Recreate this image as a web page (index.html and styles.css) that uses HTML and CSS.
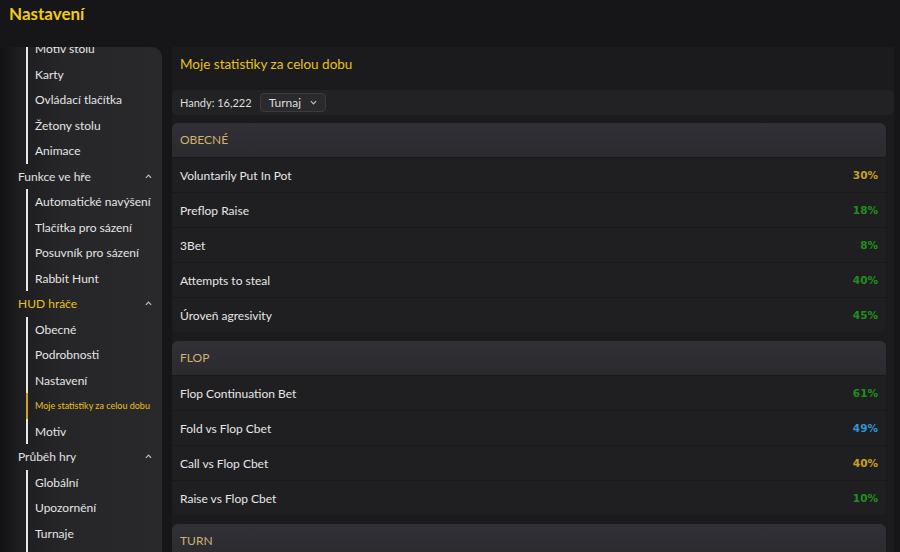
FILE: index.html
```html
<!DOCTYPE html>
<html>
<head>
	<title>Nastavení</title>
	<link rel="stylesheet" href="styles.css">
</head>
<body>
	<div class="topbar">Nastavení</div>

	<div class="layout">
		<div class="sidebar">
			<div class="menu">
				<ul class="sublist">
					<li>Motiv stolu</li>
					<li>Karty</li>
					<li>Ovládací tlačítka</li>
					<li>Žetony stolu</li>
					<li>Animace</li>
				</ul>
				<div class="group">Funkce ve hře <svg class="caret" viewBox="0 0 8 5"><polyline points="1,4 4,1 7,4"/></svg></div>
				<ul class="sublist">
					<li>Automatické navýšení</li>
					<li>Tlačítka pro sázení</li>
					<li>Posuvník pro sázení</li>
					<li>Rabbit Hunt</li>
				</ul>
				<div class="group active">HUD hráče <svg class="caret" viewBox="0 0 8 5"><polyline points="1,4 4,1 7,4"/></svg></div>
				<ul class="sublist">
					<li>Obecné</li>
					<li>Podrobnosti</li>
					<li>Nastavení</li>
					<li class="current">Moje statistiky za celou dobu</li>
					<li>Motiv</li>
				</ul>
				<div class="group">Průběh hry <svg class="caret" viewBox="0 0 8 5"><polyline points="1,4 4,1 7,4"/></svg></div>
				<ul class="sublist">
					<li>Globální</li>
					<li>Upozornění</li>
					<li>Turnaje</li>
					<li class="empty"></li>
				</ul>
			</div>
		</div>

		<div class="main">
			<div class="title">Moje statistiky za celou dobu</div>

			<div class="handsbar">
				<span>Handy: 16,222</span>
				<div class="select">Turnaj <svg class="down" viewBox="0 0 8 5"><polyline points="1,1 4,4 7,1"/></svg></div>
			</div>

			<div class="card">
				<div class="cardhead">OBECNÉ</div>
				<div class="row"><span>Voluntarily Put In Pot</span><b class="gold">30%</b></div>
				<div class="row"><span>Preflop Raise</span><b class="green">18%</b></div>
				<div class="row"><span>3Bet</span><b class="green">8%</b></div>
				<div class="row"><span>Attempts to steal</span><b class="green">40%</b></div>
				<div class="row"><span>Úroveň agresivity</span><b class="green">45%</b></div>
			</div>

			<div class="card">
				<div class="cardhead">FLOP</div>
				<div class="row"><span>Flop Continuation Bet</span><b class="green">61%</b></div>
				<div class="row"><span>Fold vs Flop Cbet</span><b class="blue">49%</b></div>
				<div class="row"><span>Call vs Flop Cbet</span><b class="gold">40%</b></div>
				<div class="row"><span>Raise vs Flop Cbet</span><b class="green">10%</b></div>
			</div>

			<div class="card">
				<div class="cardhead">TURN</div>
			</div>
		</div>
	</div>
</body>
</html>
```

FILE: styles.css
```css
*{
	box-sizing:border-box;
}

html,body{
	margin:0;
	height:100%;
	overflow:hidden;
}

body{
	background-color:#161618;
	font-family:Lato,"Noto Sans",sans-serif;
	color:#e4e4e4;
}

.topbar{
	height:47px;
	padding:3px 0 0 9px;
	font-size:17px;
	font-weight:bold;
	color:#f2cb14;
}

.layout{
	display:flex;
	height:505px;
}

.sidebar{
	width:162px;
	flex-shrink:0;
	overflow:hidden;
	border-radius:0 10px 0 0;
	background:linear-gradient(90deg,#121214 0%,#1e1e21 12%,#262629 40%,#29292c 100%);
}

.menu{
	margin-top:-11px;
}

.sublist{
	list-style:none;
	margin:0 0 0 26px;
	padding:0;
}

.sublist li{
	height:25.5px;
	line-height:25.5px;
	padding-left:7px;
	border-left:2px solid #e8e8e8;
	font-size:12px;
	white-space:nowrap;
}

.sublist li.current{
	border-left-color:#c9a227;
	color:#e8c21c;
	font-size:9px;
}

.group{
	display:flex;
	align-items:center;
	justify-content:space-between;
	height:25.5px;
	padding:0 10px 0 18px;
	font-size:12px;
	color:#e0e0e0;
}

.group.active{
	color:#e8c21c;
}

.caret{
	width:7px;
	height:5px;
	fill:none;
	stroke:#bdbdbd;
	stroke-width:1.4;
}

.main{
	flex:1;
	margin-left:10px;
	margin-right:6px;
	background-color:#1b1b1d;
}

.title{
	padding:9px 0 0 8px;
	height:43px;
	line-height:16px;
	font-size:13.5px;
	color:#e8c21c;
}

.handsbar{
	display:flex;
	align-items:center;
	gap:8px;
	height:25px;
	padding-left:8px;
	margin-bottom:8px;
	border-radius:5px;
	background-color:#222224;
	font-size:11px;
	color:#dedede;
}

.select{
	display:flex;
	align-items:center;
	gap:9px;
	height:19px;
	padding:0 8px;
	border:1px solid #3b3b3f;
	border-radius:4px;
	background-color:#2a2a2d;
	font-size:12px;
}

.down{
	width:7px;
	height:5px;
	fill:none;
	stroke:#bdbdbd;
	stroke-width:1.4;
}

.card{
	margin-right:8px;
	margin-bottom:9px;
	border-radius:6px;
	overflow:hidden;
	background-color:#1f1f21;
}

.cardhead{
	height:34px;
	line-height:34px;
	padding-left:8px;
	font-size:12px;
	color:#d0b26e;
	background:linear-gradient(180deg,#303036,#2a2a2f);
}

.row{
	display:flex;
	justify-content:space-between;
	align-items:center;
	height:35px;
	padding:0 8px;
	border-top:1px solid #19191a;
	font-size:12px;
	color:#e6e6e6;
}

.row:first-of-type{
	border-top:0;
}

.row b{
	font-family:"DejaVu Sans",sans-serif;
	font-size:10.5px;
}

.gold{
	color:#c9a020;
}

.green{
	color:#1f8f1f;
}

.blue{
	color:#2c96d6;
}
```
